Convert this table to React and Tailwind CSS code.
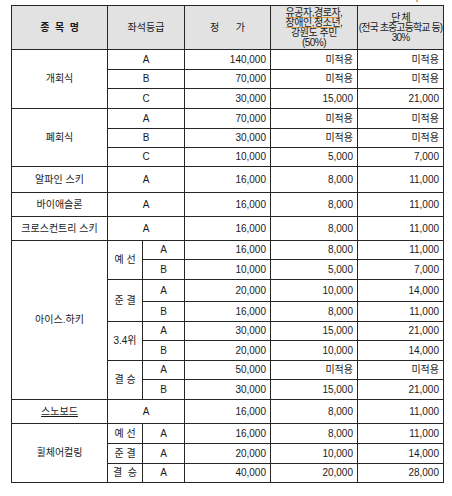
import React from "react";

const font = {
  fontFamily: '"Liberation Sans", "Noto Sans CJK KR", sans-serif',
};

const bd = "border border-[#262626]";
const num = `${bd} text-right pr-[4px]`;
const ctr = `${bd} text-center`;

const Row = ({ h, grade, span, price, disc, group, lead }) => (
  <tr className={h}>
    {lead}
    {grade !== undefined && (
      <td className={ctr} colSpan={span}>
        {grade}
      </td>
    )}
    <td className={num}>{price}</td>
    <td className={num}>{disc}</td>
    <td className={num}>{group}</td>
  </tr>
);

export default function App() {
  return (
    <div className="w-[452px] h-[496px] bg-white text-[#1a1a1a] text-[10px] leading-[12px]" style={font}>
      <div className="h-[5px] overflow-hidden relative">
        <span className="absolute left-[410px] top-[-8px] text-[10px] text-[#555]">가</span>
      </div>
      <table className="ml-[11px] w-[432px] table-fixed border-collapse border border-[#262626]">
        <colgroup>
          <col className="w-[96px]" />
          <col className="w-[35px]" />
          <col className="w-[42px]" />
          <col className="w-[86px]" />
          <col className="w-[87px]" />
          <col className="w-[86px]" />
        </colgroup>
        <thead>
          <tr className="h-[44px] bg-[#e2e2e2]">
            <th className={`${ctr} font-bold`}>종&nbsp;&nbsp;목&nbsp;&nbsp;명</th>
            <th className={`${ctr} font-normal`} colSpan={2}>
              좌석등급
            </th>
            <th className={`${ctr} font-normal`}>정&nbsp;&nbsp;&nbsp;&nbsp;&nbsp;&nbsp;가</th>
            <th className={`${ctr} font-normal leading-[10px] tracking-[-0.5px]`}>
              <span className="underline decoration-[#d9a14a]">유공자,경로자,</span>
              <br />
              <span className="underline decoration-[#d9a14a]">장애인,청소년,</span>
              <br />
              강원도 주민
              <br />
              (50%)
            </th>
            <th className={`${ctr} font-normal leading-[10px] tracking-[-0.9px] whitespace-nowrap`}>
              단 체
              <br />
              (전국 초중고등학교 등)
              <br />
              30%
            </th>
          </tr>
        </thead>
        <tbody>
          <Row h="h-[20px]" lead={<td className={ctr} rowSpan={3}>개회식</td>} grade="A" span={2} price="140,000" disc="미적용" group="미적용" />
          <Row h="h-[19px]" grade="B" span={2} price="70,000" disc="미적용" group="미적용" />
          <Row h="h-[20px]" grade="C" span={2} price="30,000" disc="15,000" group="21,000" />

          <Row h="h-[20px]" lead={<td className={ctr} rowSpan={3}>폐회식</td>} grade="A" span={2} price="70,000" disc="미적용" group="미적용" />
          <Row h="h-[19px]" grade="B" span={2} price="30,000" disc="미적용" group="미적용" />
          <Row h="h-[19px]" grade="C" span={2} price="10,000" disc="5,000" group="7,000" />

          <Row h="h-[26px]" lead={<td className={ctr}>알파인 스키</td>} grade="A" span={2} price="16,000" disc="8,000" group="11,000" />
          <Row h="h-[24px]" lead={<td className={ctr}>바이애슬론</td>} grade="A" span={2} price="16,000" disc="8,000" group="11,000" />
          <Row h="h-[24px]" lead={<td className={ctr}>크로스컨트리 스키</td>} grade="A" span={2} price="16,000" disc="8,000" group="11,000" />

          <Row
            h="h-[19px]"
            lead={
              <>
                <td className={ctr} rowSpan={8}>아이스.하키</td>
                <td className={ctr} rowSpan={2}>예 선</td>
              </>
            }
            grade="A"
            price="16,000"
            disc="8,000"
            group="11,000"
          />
          <Row h="h-[20px]" grade="B" price="10,000" disc="5,000" group="7,000" />
          <Row h="h-[22px]" lead={<td className={ctr} rowSpan={2}>준 결</td>} grade="A" price="20,000" disc="10,000" group="14,000" />
          <Row h="h-[20px]" grade="B" price="16,000" disc="8,000" group="11,000" />
          <Row h="h-[19px]" lead={<td className={ctr} rowSpan={2}>3.4위</td>} grade="A" price="30,000" disc="15,000" group="21,000" />
          <Row h="h-[20px]" grade="B" price="20,000" disc="10,000" group="14,000" />
          <Row h="h-[19px]" lead={<td className={ctr} rowSpan={2}>결 승</td>} grade="A" price="50,000" disc="미적용" group="미적용" />
          <Row h="h-[20px]" grade="B" price="30,000" disc="15,000" group="21,000" />

          <Row
            h="h-[24px]"
            lead={
              <td className={ctr}>
                <span className="underline">스노보드</span>
              </td>
            }
            grade="A"
            span={2}
            price="16,000"
            disc="8,000"
            group="11,000"
          />

          <Row
            h="h-[20px]"
            lead={
              <>
                <td className={ctr} rowSpan={3}>휠체어컬링</td>
                <td className={ctr}>예 선</td>
              </>
            }
            grade="A"
            price="16,000"
            disc="8,000"
            group="11,000"
          />
          <Row h="h-[20px]" lead={<td className={ctr}>준 결</td>} grade="A" price="20,000" disc="10,000" group="14,000" />
          <Row h="h-[19px]" lead={<td className={ctr}>결&nbsp;&nbsp;승</td>} grade="A" price="40,000" disc="20,000" group="28,000" />
        </tbody>
      </table>
    </div>
  );
}
